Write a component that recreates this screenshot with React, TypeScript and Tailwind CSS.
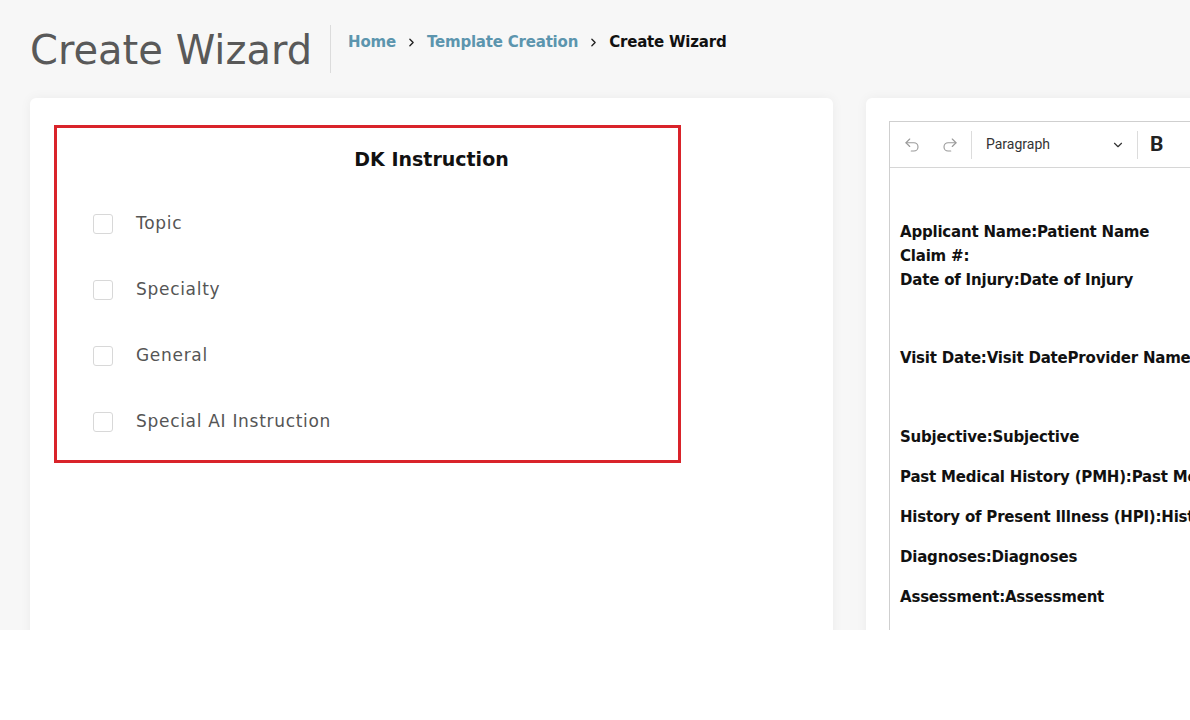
import React from "react";
import { Undo2, Redo2, ChevronDown, ChevronRight } from "lucide-react";

const items = ["Topic", "Specialty", "General", "Special AI Instruction"];

export default function App() {
  return (
    <div className="w-[1190px] h-[720px] bg-white overflow-hidden font-['DejaVu_Sans',sans-serif]">
      <div className="h-[630px] bg-[#f7f7f7] overflow-hidden">
        <div className="flex items-start pl-[30px] pt-[25px] h-[98px]">
          <h1 className="text-[40px] leading-[48px] text-[#595959] font-normal mt-[1px]">Create Wizard</h1>
          <div className="w-px h-[48px] bg-[#dcdcdc] ml-[18px]" />
          <nav className="flex items-center ml-[17px] mt-[7px] text-[15px] leading-[20px] font-semibold tracking-[-0.2px]">
            <span className="text-[#5c95ae]">Home</span>
            <ChevronRight size={13} strokeWidth={2.5} className="mx-[9px] text-[#222]" />
            <span className="text-[#5c95ae]">Template Creation</span>
            <ChevronRight size={13} strokeWidth={2.5} className="mx-[9px] text-[#222]" />
            <span className="text-[#111]">Create Wizard</span>
          </nav>
        </div>
        <div className="flex gap-[33px] pl-[30px]">
          <div className="relative w-[803px] shrink-0 h-[600px] bg-white rounded-[6px] shadow-[0_0_12px_rgba(0,0,0,0.05)]">
            <div className="pt-[47px]">
              <h2 className="text-center text-[19px] leading-[28px] font-semibold text-[#111]">DK Instruction</h2>
              <div className="mt-[18px] pl-[63px]">
                {items.map((t) => (
                  <div key={t} className="h-[66px] flex items-center gap-[23px]">
                    <span className="w-[20px] h-[20px] border border-[#d8d8d8] rounded-[3px] bg-white" />
                    <span className="text-[17px] tracking-[0.7px] text-[#555]">{t}</span>
                  </div>
                ))}
              </div>
            </div>
            <div className="absolute left-[24px] top-[27px] w-[627px] h-[338px] border-[3px] border-[#d9232a]" />
          </div>
          <div className="w-[400px] shrink-0 h-[600px] bg-white rounded-l-[6px] shadow-[0_0_12px_rgba(0,0,0,0.05)] pl-[23px] pt-[23px]">
            <div className="border-l border-t border-[#cfcfcf] h-[560px]">
              <div className="h-[46px] border-b border-[#d6d6d6] flex items-center">
                <div className="w-[38px] flex justify-center ml-[3px]">
                  <Undo2 size={18} strokeWidth={1.5} className="text-[#9a9a9a]" />
                </div>
                <div className="w-[38px] flex justify-center">
                  <Redo2 size={18} strokeWidth={1.5} className="text-[#9a9a9a]" />
                </div>
                <div className="w-px h-[28px] bg-[#dcdcdc] ml-[2px]" />
                <div className="flex items-center w-[165px] pl-[14px] pr-[12px] justify-between font-['Roboto',sans-serif] text-[14px] text-[#333]">
                  <span>Paragraph</span>
                  <ChevronDown size={14} strokeWidth={2} className="text-[#333]" />
                </div>
                <div className="w-px h-[28px] bg-[#dcdcdc]" />
                <span className="ml-[12px] font-['Roboto',sans-serif] font-bold text-[21px] text-[#222]">B</span>
              </div>
              <div className="pl-[10px] pt-[52px] text-[15px] leading-[24px] font-semibold tracking-[-0.2px] text-[#111] whitespace-nowrap overflow-hidden">
                <p>Applicant Name:Patient Name</p>
                <p>Claim #:</p>
                <p>Date of Injury:Date of Injury</p>
                <p className="mt-[54px]">Visit Date:Visit DateProvider Name</p>
                <p className="mt-[55px]">Subjective:Subjective</p>
                <p className="mt-[16px]">Past Medical History (PMH):Past Medical History</p>
                <p className="mt-[16px]">History of Present Illness (HPI):History of Present Illness</p>
                <p className="mt-[16px]">Diagnoses:Diagnoses</p>
                <p className="mt-[16px]">Assessment:Assessment</p>
              </div>
            </div>
          </div>
        </div>
      </div>
    </div>
  );
}
